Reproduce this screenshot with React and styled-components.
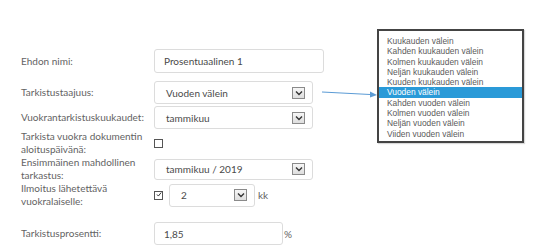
import React from "react";
import styled, { createGlobalStyle } from "styled-components";

const GlobalStyle = createGlobalStyle`
  html, body {
    margin: 0;
    padding: 0;
    background: #ffffff;
  }
  body {
    font-family: "Lato", "Liberation Sans", sans-serif;
    color: #5f5f5f;
  }
`;

const frequencies = [
  "Kuukauden välein",
  "Kahden kuukauden välein",
  "Kolmen kuukauden välein",
  "Neljän kuukauden välein",
  "Kuuden kuukauden välein",
  "Vuoden välein",
  "Kahden vuoden välein",
  "Kolmen vuoden välein",
  "Neljän vuoden välein",
  "Viiden vuoden välein",
];

const Chevron = () => (
  <svg width="8" height="6" viewBox="0 0 8 6">
    <path d="M1 1.5 L4 4.5 L7 1.5" fill="none" stroke="#333" strokeWidth="1.4" />
  </svg>
);

const Select = ({ value, width, height }) => (
  <SelectBox $w={width} $h={height}>
    <SelectText>{value}</SelectText>
    <DropButton>
      <Chevron />
    </DropButton>
  </SelectBox>
);

const App = () => {
  return (
    <Page>
      <GlobalStyle />
      <Form>
        <Row $h={24}>
          <Label>Ehdon nimi:</Label>
          <TextInput $w={170} $h={24}>Prosentuaalinen 1</TextInput>
        </Row>
        <Row $h={23} $mt={8}>
          <Label>Tarkistustaajuus:</Label>
          <Select value="Vuoden välein" width={159} height={23} />
        </Row>
        <Row $h={23} $mt={2}>
          <Label>Vuokrantarkistuskuukaudet:</Label>
          <Select value="tammikuu" width={159} height={23} />
        </Row>
        <Row $h={26} $mt={1}>
          <Label>Tarkista vuokra dokumentin aloituspäivänä:</Label>
          <CheckBox />
        </Row>
        <Row $h={26}>
          <Label>Ensimmäinen mahdollinen tarkastus:</Label>
          <Select value="tammikuu / 2019" width={159} height={21} />
        </Row>
        <Row $h={26}>
          <Label>Ilmoitus lähetettävä vuokralaiselle:</Label>
          <Inline>
            <CheckBox $checked>
              <svg width="9" height="9" viewBox="0 0 9 9">
                <path d="M1.5 4.5 L3.6 6.8 L7.8 1.5" fill="none" stroke="#333" strokeWidth="1.5" />
              </svg>
            </CheckBox>
            <Select value="2" width={86} height={23} />
            <Unit>kk</Unit>
          </Inline>
        </Row>
        <Row $h={23} $mt={14}>
          <Label>Tarkistusprosentti:</Label>
          <Inline>
            <TextInput $w={129} $h={23}>1,85</TextInput>
            <Unit $gap={1}>%</Unit>
          </Inline>
        </Row>
      </Form>

      <Pointer width="60" height="10" viewBox="0 0 60 10">
        <line x1="0" y1="3" x2="50" y2="5.6" stroke="#5b9bd5" strokeWidth="1" />
        <path d="M48 2.4 L55 6 L48 8.6 Z" fill="#5b9bd5" />
      </Pointer>

      <OptionList>
        {frequencies.map((f) => (
          <Option key={f} $active={f === "Vuoden välein"}>
            {f}
          </Option>
        ))}
      </OptionList>
    </Page>
  );
};

export default App;

const Page = styled.div`
  position: relative;
  width: 544px;
  height: 252px;
  overflow: hidden;
`;

const Form = styled.div`
  display: flex;
  flex-direction: column;
  padding-top: 49px;
  padding-left: 21px;
`;

const Row = styled.div`
  display: flex;
  align-items: center;
  height: ${(p) => p.$h}px;
  margin-top: ${(p) => p.$mt || 0}px;
`;

const Label = styled.div`
  width: 125px;
  margin-right: 8px;
  font-size: 10px;
  line-height: 13px;
  color: #636363;
`;

const TextInput = styled.div`
  box-sizing: border-box;
  width: ${(p) => p.$w}px;
  height: ${(p) => p.$h}px;
  display: flex;
  align-items: center;
  padding-left: 9px;
  border: 1px solid #dcdcdc;
  border-radius: 3px;
  font-size: 10px;
  color: #4a4a4a;
`;

const SelectBox = styled.div`
  box-sizing: border-box;
  width: ${(p) => p.$w}px;
  height: ${(p) => p.$h}px;
  display: flex;
  align-items: center;
  justify-content: space-between;
  padding: 0 7px 0 11px;
  border: 1px solid #dcdcdc;
  border-radius: 3px;
  font-size: 10px;
  color: #4a4a4a;
`;

const SelectText = styled.span`
  white-space: nowrap;
`;

const DropButton = styled.div`
  box-sizing: border-box;
  width: 13px;
  height: 12px;
  display: flex;
  align-items: center;
  justify-content: center;
  border: 1px solid #8a8a8a;
  background: linear-gradient(#f6f6f6, #dedede);
`;

const CheckBox = styled.div`
  box-sizing: border-box;
  width: 9px;
  height: 9px;
  margin-right: 6px;
  display: flex;
  align-items: center;
  justify-content: center;
  border: 1px solid #555;
  background: #fff;

  svg {
    margin-top: -1px;
    margin-left: 1px;
  }
`;

const Inline = styled.div`
  display: flex;
  align-items: center;
`;

const Unit = styled.span`
  margin-left: ${(p) => (p.$gap !== undefined ? p.$gap : 3)}px;
  font-size: 10px;
  color: #5f5f5f;
`;

const Pointer = styled.svg`
  position: absolute;
  left: 322px;
  top: 89px;
`;

const OptionList = styled.div`
  position: absolute;
  left: 377px;
  top: 29px;
  box-sizing: border-box;
  width: 147px;
  height: 114px;
  padding-top: 5px;
  border: 2px solid #444;
  background: #fff;
  box-shadow: 1px 1px 1px rgba(0, 0, 0, 0.15);
`;

const Option = styled.div`
  height: 10.3px;
  line-height: 10.3px;
  padding-left: 8px;
  font-family: "Liberation Sans", Arial, sans-serif;
  font-size: 8.4px;
  white-space: nowrap;
  color: ${(p) => (p.$active ? "#ffffff" : "#5a5a5a")};
  background: ${(p) => (p.$active ? "#2a9ad8" : "transparent")};
`;
